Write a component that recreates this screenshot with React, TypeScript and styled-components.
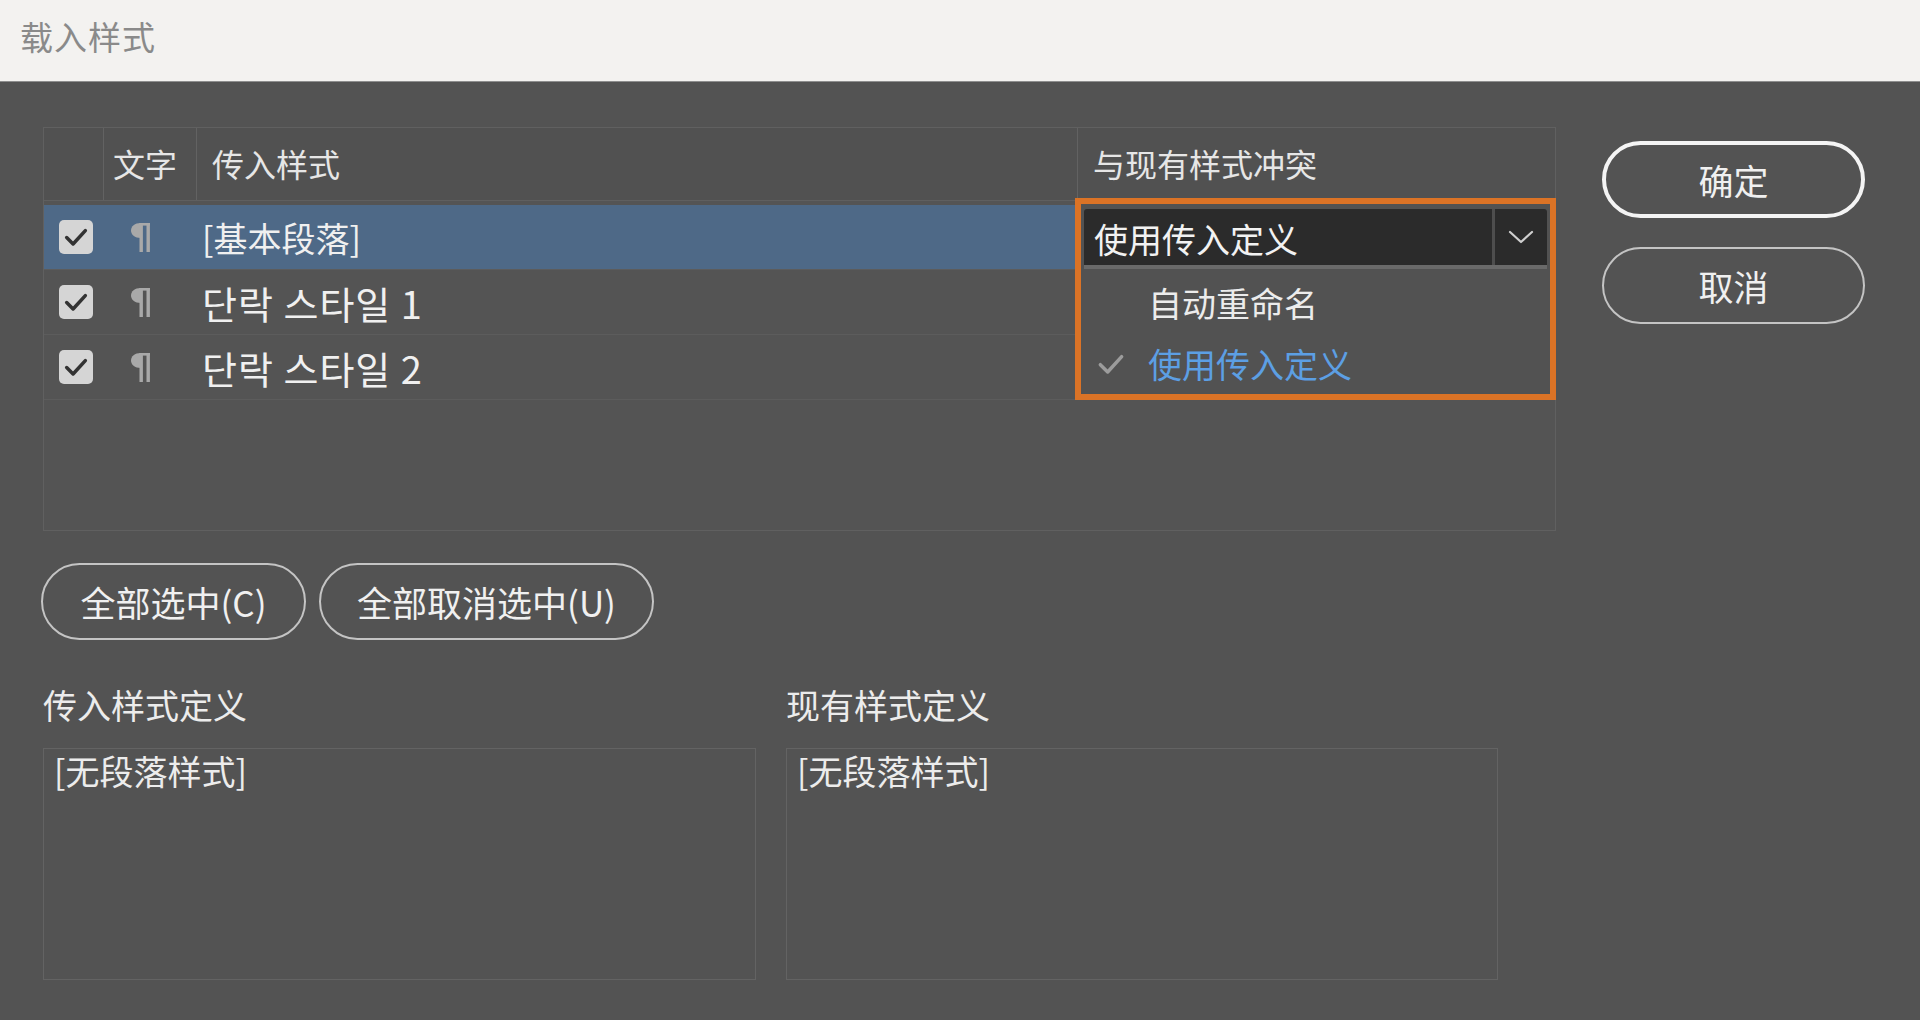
import styled, { createGlobalStyle } from 'styled-components'

const GlobalStyle = createGlobalStyle`
  html, body {
    margin: 0;
    padding: 0;
    background: #535353;
  }
  body {
    font-family: "Noto Sans CJK SC", "Noto Sans CJK KR", "Noto Sans", sans-serif;
    color: #e8e8e8;
  }
  * {
    box-sizing: border-box;
  }
`

const Window = styled.div`
  width: 1920px;
  height: 1020px;
  display: flex;
  flex-direction: column;
  background: #535353;
  overflow: hidden;
`

const TitleBar = styled.header`
  height: 82px;
  flex: none;
  display: flex;
  align-items: center;
  padding: 0 0 10px 20px;
  background: #f3f2f0;
  border-bottom: 1px solid #8e8e8e;
  color: #8a8a8a;
  font-size: 33px;
  letter-spacing: 1px;
`

const Body = styled.main`
  flex: 1;
  display: flex;
  flex-direction: column;
  padding: 45px 0 0 43px;
`

const TopSection = styled.section`
  display: flex;
  align-items: flex-start;
`

const Table = styled.div`
  width: 1513px;
  height: 404px;
  border: 1px solid #606060;
  background: #545454;
  display: flex;
  flex-direction: column;
`

const columns = '60px 93px 881px 1fr'

const HeaderRow = styled.div`
  display: grid;
  grid-template-columns: ${columns};
  height: 73px;
  border-bottom: 1px solid #5f5f5f;
  background: #515151;
`

const HeaderCell = styled.div<{ $pad?: number; $divider?: boolean }>`
  display: flex;
  align-items: center;
  padding-left: ${p => p.$pad ?? 0}px;
  padding-bottom: 2px;
  font-size: 32px;
  color: #e6e6e6;
  border-right: ${p => (p.$divider ? '1px solid #626262' : 'none')};
`

const Rows = styled.div`
  padding-top: 4px;
`

const Row = styled.div<{ $selected?: boolean }>`
  display: grid;
  grid-template-columns: ${columns};
  height: 65px;
  border-bottom: 1px solid #5c5c5c;
  background: ${p => (p.$selected ? '#4e6987' : 'transparent')};
`

const Cell = styled.div<{ $pad?: number; $wide?: boolean }>`
  position: relative;
  display: flex;
  align-items: center;
  padding-left: ${p => p.$pad ?? 0}px;
  font-size: ${p => (p.$wide ? 38 : 34)}px;
  letter-spacing: ${p => (p.$wide ? 1 : 0)}px;
  color: #f0f0f0;
  white-space: nowrap;
`

const CheckBox = styled.span`
  width: 34px;
  height: 34px;
  border-radius: 5px;
  background: #d5d5d5;
  display: flex;
  align-items: center;
  justify-content: center;
`

const DropPanel = styled.div`
  position: absolute;
  left: -3px;
  top: -7px;
  width: 481px;
  border: 6px solid #db7326;
  background: #525252;
  padding: 5px 3px 0;
  z-index: 5;
`

const Select = styled.div`
  height: 60px;
  display: flex;
  background: #2b2b2b;
  border-radius: 3px 3px 0 0;
  border-bottom: 4px solid #6a6a6a;
`

const SelectValue = styled.div`
  flex: 1;
  display: flex;
  align-items: center;
  padding: 2px 0 0 10px;
  font-size: 34px;
  color: #f2f2f2;
  border-right: 3px solid #4e4e4e;
`

const SelectArrow = styled.div`
  width: 52px;
  display: flex;
  align-items: center;
  justify-content: center;
`

const Menu = styled.ul`
  list-style: none;
  margin: 0;
  padding: 3px 0 0;
`

const MenuItem = styled.li<{ $active?: boolean }>`
  height: 61px;
  display: flex;
  align-items: center;
  padding-left: 11px;
  font-size: 34px;
  color: ${p => (p.$active ? '#5c9fe4' : '#ececec')};
`

const MenuCheck = styled.span`
  width: 53px;
  display: flex;
  align-items: center;
`

const ButtonColumn = styled.div`
  margin: 14px 0 0 46px;
  display: flex;
  flex-direction: column;
  gap: 29px;
`

const PillButton = styled.button<{ $primary?: boolean; $w?: number }>`
  width: ${p => p.$w ?? 263}px;
  height: 77px;
  border-radius: 40px;
  background: transparent;
  border: ${p => (p.$primary ? '4px solid #f4f4f4' : '2px solid #c4c4c4')};
  color: #f0f0f0;
  font-family: inherit;
  font-size: 35px;
  padding: 0;
  display: flex;
  align-items: center;
  justify-content: center;
`

const SelectButtons = styled.div`
  margin: 32px 0 0 -2px;
  display: flex;
  gap: 13px;
`

const Definitions = styled.section`
  margin-top: 43px;
  display: flex;
  gap: 30px;
`

const DefColumn = styled.div<{ $w: number }>`
  width: ${p => p.$w}px;
  display: flex;
  flex-direction: column;
`

const DefLabel = styled.div`
  height: 44px;
  line-height: 44px;
  font-size: 34px;
  color: #ececec;
`

const DefBox = styled.div`
  margin-top: 21px;
  height: 232px;
  border: 1px solid #636363;
  padding: 0 10px;
  line-height: 44px;
  font-size: 34px;
  color: #ececec;
`

const CheckMark = ({ size = 24, color = '#333', width = 3 }) => (
  <svg width={size} height={size} viewBox="0 0 24 24">
    <polyline points="4,12.5 9.5,18 20,6.5" fill="none" stroke={color} strokeWidth={width} strokeLinecap="round" strokeLinejoin="round" />
  </svg>
)

const Chevron = () => (
  <svg width="26" height="14" viewBox="0 0 26 14">
    <polyline points="2,2 13,12 24,2" fill="none" stroke="#cfcfcf" strokeWidth="2.2" strokeLinecap="round" strokeLinejoin="round" />
  </svg>
)

// paragraph-style icon
const ParagraphIcon = () => (
  <svg width="24" height="32" viewBox="0 0 24 32">
    <path d="M12 2 C5.5 2 2 5.5 2 9.5 C2 13.5 5.5 17 12 17 Z" fill="#a9a9a9" />
    <rect x="10.5" y="2" width="3.4" height="29" fill="#a9a9a9" />
    <rect x="17.5" y="2" width="3.4" height="29" fill="#a9a9a9" />
    <rect x="10.5" y="2" width="10.4" height="2.6" fill="#a9a9a9" />
  </svg>
)

const styles = [
  { name: '[基本段落]', selected: true, korean: false },
  { name: '단락 스타일 1', selected: false, korean: true },
  { name: '단락 스타일 2', selected: false, korean: true },
]

export default function App() {
  return (
    <>
      <GlobalStyle />
      <Window>
        <TitleBar>载入样式</TitleBar>
        <Body>
          <TopSection>
            <Table>
              <HeaderRow>
                <HeaderCell $divider />
                <HeaderCell $pad={9} $divider>文字</HeaderCell>
                <HeaderCell $pad={15} $divider>传入样式</HeaderCell>
                <HeaderCell $pad={15}>与现有样式冲突</HeaderCell>
              </HeaderRow>
              <Rows>
                {styles.map((s, i) => (
                  <Row key={s.name} $selected={s.selected}>
                    <Cell $pad={15}>
                      <CheckBox>
                        <CheckMark size={28} />
                      </CheckBox>
                    </Cell>
                    <Cell $pad={25}>
                      <ParagraphIcon />
                    </Cell>
                    <Cell $pad={5} $wide={s.korean}>{s.name}</Cell>
                    <Cell>
                      {i === 0 && (
                        <DropPanel>
                          <Select>
                            <SelectValue>使用传入定义</SelectValue>
                            <SelectArrow>
                              <Chevron />
                            </SelectArrow>
                          </Select>
                          <Menu>
                            <MenuItem>
                              <MenuCheck />
                              自动重命名
                            </MenuItem>
                            <MenuItem $active>
                              <MenuCheck>
                                <CheckMark size={32} color="#9c9c9c" width={2.6} />
                              </MenuCheck>
                              使用传入定义
                            </MenuItem>
                          </Menu>
                        </DropPanel>
                      )}
                    </Cell>
                  </Row>
                ))}
              </Rows>
            </Table>
            <ButtonColumn>
              <PillButton $primary>确定</PillButton>
              <PillButton>取消</PillButton>
            </ButtonColumn>
          </TopSection>

          <SelectButtons>
            <PillButton $w={265}>全部选中(C)</PillButton>
            <PillButton $w={335}>全部取消选中(U)</PillButton>
          </SelectButtons>

          <Definitions>
            <DefColumn $w={713}>
              <DefLabel>传入样式定义</DefLabel>
              <DefBox>[无段落样式]</DefBox>
            </DefColumn>
            <DefColumn $w={712}>
              <DefLabel>现有样式定义</DefLabel>
              <DefBox>[无段落样式]</DefBox>
            </DefColumn>
          </Definitions>
        </Body>
      </Window>
    </>
  )
}
